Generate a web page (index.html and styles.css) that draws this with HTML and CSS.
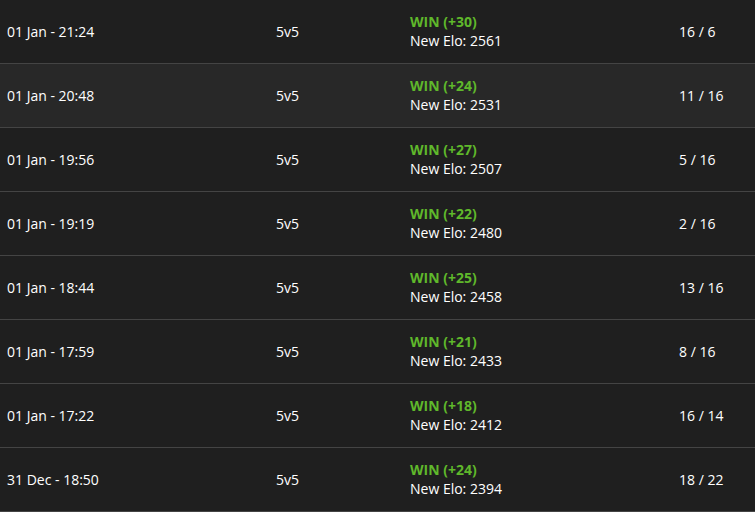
FILE: index.html
```html
<!DOCTYPE html>
<html lang="en">
<head>
    <meta charset="UTF-8">
    <meta name="viewport" content="width=device-width, initial-scale=1.0">
    <title>Match History</title>
    <link rel="stylesheet" href="styles.css">
</head>
<body>
    <div class="matches">
        <div class="match">
            <div class="date">01 Jan - 21:24</div>
            <div class="mode">5v5</div>
            <div class="elo"><span class="win">WIN (+30)</span><span>New Elo: 2561</span></div>
            <div class="score">16 / 6</div>
        </div>
        <div class="match hover">
            <div class="date">01 Jan - 20:48</div>
            <div class="mode">5v5</div>
            <div class="elo"><span class="win">WIN (+24)</span><span>New Elo: 2531</span></div>
            <div class="score">11 / 16</div>
        </div>
        <div class="match">
            <div class="date">01 Jan - 19:56</div>
            <div class="mode">5v5</div>
            <div class="elo"><span class="win">WIN (+27)</span><span>New Elo: 2507</span></div>
            <div class="score">5 / 16</div>
        </div>
        <div class="match">
            <div class="date">01 Jan - 19:19</div>
            <div class="mode">5v5</div>
            <div class="elo"><span class="win">WIN (+22)</span><span>New Elo: 2480</span></div>
            <div class="score">2 / 16</div>
        </div>
        <div class="match">
            <div class="date">01 Jan - 18:44</div>
            <div class="mode">5v5</div>
            <div class="elo"><span class="win">WIN (+25)</span><span>New Elo: 2458</span></div>
            <div class="score">13 / 16</div>
        </div>
        <div class="match">
            <div class="date">01 Jan - 17:59</div>
            <div class="mode">5v5</div>
            <div class="elo"><span class="win">WIN (+21)</span><span>New Elo: 2433</span></div>
            <div class="score">8 / 16</div>
        </div>
        <div class="match">
            <div class="date">01 Jan - 17:22</div>
            <div class="mode">5v5</div>
            <div class="elo"><span class="win">WIN (+18)</span><span>New Elo: 2412</span></div>
            <div class="score">16 / 14</div>
        </div>
        <div class="match">
            <div class="date">31 Dec - 18:50</div>
            <div class="mode">5v5</div>
            <div class="elo"><span class="win">WIN (+24)</span><span>New Elo: 2394</span></div>
            <div class="score">18 / 22</div>
        </div>
    </div>
</body>
</html>
```

FILE: styles.css
```css
body {
    margin: 0;
    padding: 0;
    background-color: #1f1f1f;
    font-family: "Open Sans", Arial, sans-serif;
    font-size: 14px;
    color: #fff;
}

.match {
    display: grid;
    grid-template-columns: 269px 134px 269px 1fr;
    align-items: center;
    height: 62px;
    padding: 0 0 1px 7px;
    border-bottom: 1px solid #444;
    background: #1f1f1f;
}

.match.hover {
    background: #282828;
}

.elo {
    display: flex;
    flex-direction: column;
    line-height: 19px;
}

.win {
    color: #5fb82b;
    font-weight: bold;
}
```
